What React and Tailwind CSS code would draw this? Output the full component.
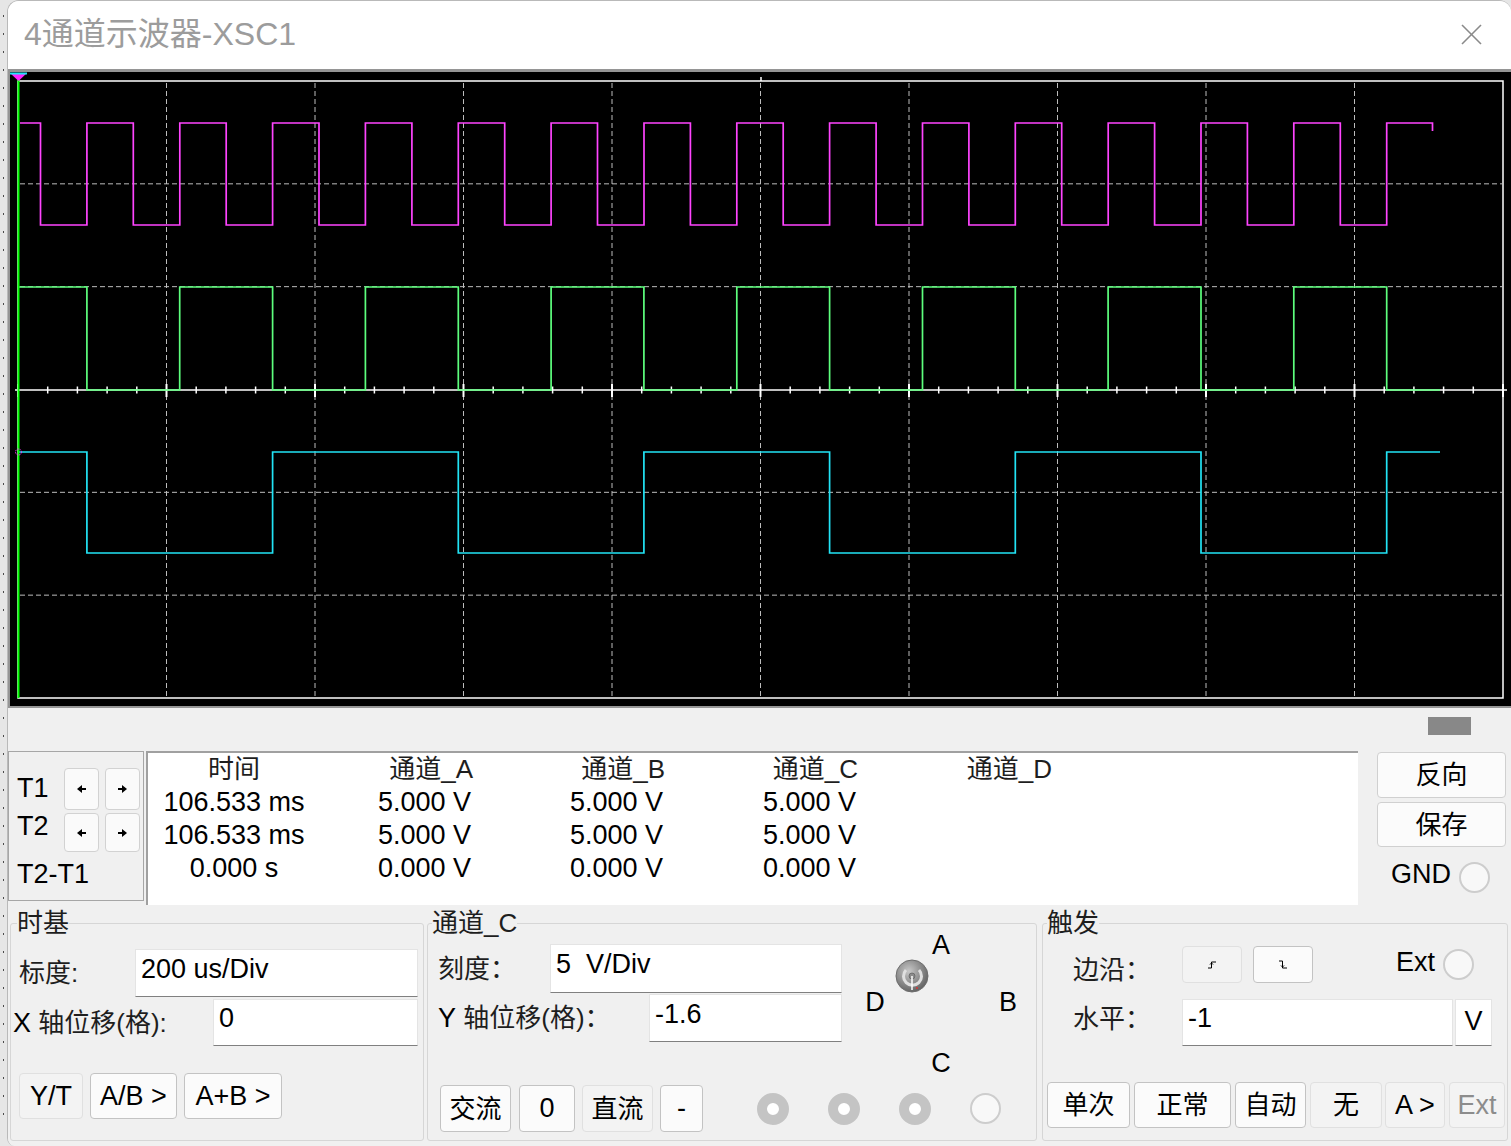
import React from "react";

const F = "font-['Liberation_Sans','Noto_Sans_CJK_SC',sans-serif]";
const BTN =
  "flex items-center justify-center rounded-[4px] border border-[#c3c3c3] bg-[#fbfbfb] text-[26px] leading-none text-black whitespace-nowrap";
const BTNL =
  "flex items-center justify-center rounded-[4px] border border-[#e0e0e0] bg-[#f3f3f3] text-[26px] leading-none text-black whitespace-nowrap";
const BTNG =
  "flex items-center justify-center rounded-[4px] border border-[#e0e0e0] bg-[#f3f3f3] text-[27px] leading-none text-[#8c8c8c] whitespace-nowrap";
const INP =
  "flex items-center bg-white border border-[#e4e4e4] border-b-[#808080] pl-[5px] pb-[8px] text-[27px] leading-none text-black whitespace-pre";
const LBL = "text-[26px] leading-[30px] text-[#1e1e1e] whitespace-nowrap";
const RING = "w-[32px] h-[32px] rounded-full border-[10px] border-[#c4c4c4] bg-white";
const EMPTY = "w-[31px] h-[31px] rounded-full border-2 border-[#cdcdcd] bg-[#f8f8f8]";

function sq(x0, xEnd, edges, yH, yL, startHigh) {
  let high = startHigh;
  let d = `M${x0} ${high ? yH : yL}`;
  for (const e of edges) {
    d += ` H${e.toFixed(1)} V${high ? yL : yH}`;
    high = !high;
  }
  d += ` H${xEnd}`;
  return d;
}

function Screen() {
  const vg = Array.from({ length: 9 }, (_, i) => 18 + 148.5 * (i + 1));
  const hg = [1, 2, 4, 5].map((j) => 81 + 102.83 * j);
  const ticks = Array.from({ length: 51 }, (_, k) => 18 + 29.7 * k);
  const aE = Array.from({ length: 30 }, (_, k) => 40.5 + 46.42 * k);
  const bE = Array.from({ length: 15 }, (_, k) => 86.9 + 92.84 * k);
  const cE = Array.from({ length: 8 }, (_, k) => 86.9 + 185.68 * k);
  return (
    <svg width="1501" height="634" viewBox="10 72 1501 634" className="block">
      <rect x="10" y="72" width="1501" height="634" fill="#000" />
      {vg.map((x, i) => (
        <line key={"v" + i} x1={x} y1="83" x2={x} y2="697" stroke="#bdbdbd" strokeWidth="1" strokeDasharray="5 3" />
      ))}
      {hg.map((y, i) => (
        <line key={"h" + i} x1="20" y1={y} x2="1502" y2={y} stroke="#bdbdbd" strokeWidth="1" strokeDasharray="5 3" />
      ))}
      <rect x="18" y="81" width="1485" height="617" fill="none" stroke="#fff" strokeWidth="1.5" />
      <line x1="15" y1="390" x2="1507" y2="390" stroke="#fff" strokeWidth="1.6" />
      {ticks.map((x, k) =>
        k % 5 === 0 ? (
          <line key={"t" + k} x1={x} y1="384" x2={x} y2="397" stroke="#fff" strokeWidth="2" />
        ) : (
          <line key={"t" + k} x1={x} y1="386.5" x2={x} y2="393.5" stroke="#fff" strokeWidth="1.5" />
        )
      )}
      <line x1="761" y1="77" x2="761" y2="81" stroke="#fff" strokeWidth="1.5" />
      <path d={sq(18, 1440, cE, 452, 553, true)} fill="none" stroke="#22e3f5" strokeWidth="1.7" />
      <path d={sq(18, 1440, bE, 287, 390, true)} fill="none" stroke="#5dff7d" strokeWidth="1.7" />
      <path d={sq(20, 1432.5, aE, 123, 225, true) + " V131"} fill="none" stroke="#ff44ff" strokeWidth="1.7" />
      <line x1="18.5" y1="76" x2="18.5" y2="698" stroke="#00ff00" strokeWidth="2" />
      <circle cx="18.5" cy="452" r="3" fill="none" stroke="#ff33ff" strokeWidth="1" strokeDasharray="1.5 1" />
      <polygon points="10,73 27,73 18.5,81" fill="#ff22ff" />
      <rect x="10" y="72.5" width="17" height="2" fill="#22e3f5" />
    </svg>
  );
}

function ArrowL() {
  return (
    <svg width="9" height="8" viewBox="0 0 9 8">
      <polygon points="0,4 5,0 5,8" fill="#000" />
      <rect x="5" y="3" width="4" height="2" fill="#000" />
    </svg>
  );
}
function ArrowR() {
  return (
    <svg width="9" height="8" viewBox="0 0 9 8">
      <polygon points="9,4 4,0 4,8" fill="#000" />
      <rect x="0" y="3" width="4" height="2" fill="#000" />
    </svg>
  );
}

function Knob() {
  return (
    <svg width="34" height="34" viewBox="0 0 34 34">
      <defs>
        <radialGradient id="kg" cx="40%" cy="35%" r="70%">
          <stop offset="0" stopColor="#c8c8c8" />
          <stop offset="1" stopColor="#5e5e5e" />
        </radialGradient>
      </defs>
      <circle cx="17" cy="17" r="16" fill="url(#kg)" stroke="#6e6e6e" />
      <path d="M24 11 A9 9 0 1 1 11 11" fill="none" stroke="#e0e0e0" strokeWidth="3" />
      <circle cx="17" cy="17" r="3" fill="#8c8c8c" stroke="#555" strokeWidth="0.6" />
      <line x1="17" y1="17" x2="17" y2="31" stroke="#fff" strokeWidth="1.5" />
      <circle cx="22" cy="29" r="1" fill="#d33" />
    </svg>
  );
}

function EdgeUp() {
  return (
    <svg width="9" height="8" viewBox="0 0 9 8">
      <polyline points="0,7 3.5,7 3.5,1 8,1" fill="none" stroke="#000" strokeWidth="1" />
      <polyline points="2,3.5 3.5,2 5,3.5" fill="none" stroke="#000" strokeWidth="1" />
    </svg>
  );
}
function EdgeDown() {
  return (
    <svg width="9" height="9" viewBox="0 0 9 9">
      <polyline points="0,1 3.5,1 3.5,8 8,8" fill="none" stroke="#000" strokeWidth="1" />
      <polyline points="2,5.5 3.5,7 5,5.5" fill="none" stroke="#000" strokeWidth="1" />
    </svg>
  );
}

function CloseX() {
  return (
    <svg width="21" height="21" viewBox="0 0 21 21">
      <line x1="1" y1="1" x2="20" y2="20" stroke="#8a8a8a" strokeWidth="1.6" />
      <line x1="20" y1="1" x2="1" y2="20" stroke="#8a8a8a" strokeWidth="1.6" />
    </svg>
  );
}

export default function App() {
  const dots = Array.from({ length: 62 }, (_, i) => i);
  return (
    <div className={`w-[1511px] h-[1146px] flex overflow-hidden bg-[#e6e6e6] ${F}`}>
      {/* desktop strip */}
      <div className="w-[7px] h-full flex flex-col items-center gap-[16px] pt-[15px]">
        {dots.map((i) => (
          <div key={i} className="w-[1px] h-[2px] bg-[#4a4a4a]" />
        ))}
      </div>

      {/* window */}
      <div className="flex-1 h-full flex flex-col border-l border-t border-[#b9b9b9] rounded-tl-[12px] rounded-tr-[12px] rounded-bl-[8px] overflow-hidden bg-[#f0f0f0]">
        {/* title bar */}
        <div className="h-[68px] bg-white flex items-center justify-between pl-[16px] pr-[29px] pb-[2px]">
          <div className="text-[32px] leading-none text-[#9c9c9c]">4通道示波器-XSC1</div>
          <CloseX />
        </div>

        {/* screen */}
        <div className="h-[639px] border-t-[3px] border-l-2 border-b-2 border-[#959595] bg-black">
          <Screen />
        </div>

        {/* panel */}
        <div className="flex-1 flex flex-col bg-[#f0f0f0]">
          {/* scroll thumb row */}
          <div className="h-[42px] flex justify-end pt-[9px] pr-[40px]">
            <div className="w-[43px] h-[18px] bg-[#888888]" />
          </div>

          {/* cursor / table / buttons */}
          <div className="h-[155px] flex pt-[1px]">
            <div className="w-[136px] h-[150px] border border-[#a6a6a6] bg-[#f0f0f0] flex flex-col pl-[8px]">
              <div className="mt-[16px] h-[42px] flex">
                <div className="w-[47px] mt-[5px] text-[27px] leading-[30px] text-black">T1</div>
                <div className="w-[35px] h-[42px] flex items-center justify-center rounded-[4px] border border-[#d2d2d2] bg-[#fafafa]">
                  <ArrowL />
                </div>
                <div className="ml-[6px] w-[35px] h-[42px] flex items-center justify-center rounded-[4px] border border-[#d2d2d2] bg-[#fafafa]">
                  <ArrowR />
                </div>
              </div>
              <div className="mt-[3px] h-[39px] flex">
                <div className="w-[47px] mt-[-2px] text-[27px] leading-[30px] text-black">T2</div>
                <div className="w-[35px] h-[39px] flex items-center justify-center rounded-[4px] border border-[#d2d2d2] bg-[#fafafa]">
                  <ArrowL />
                </div>
                <div className="ml-[6px] w-[35px] h-[39px] flex items-center justify-center rounded-[4px] border border-[#d2d2d2] bg-[#fafafa]">
                  <ArrowR />
                </div>
              </div>
              <div className="mt-[7px] text-[27px] leading-[30px] text-black">T2-T1</div>
            </div>

            <div className="ml-[2px] w-[1212px] h-[154px] bg-white border-t-2 border-l-2 border-[#a0a0a0] flex text-black whitespace-nowrap">
              <div className="w-[172px] flex flex-col text-center leading-[33px]">
                <div className="text-[26px] text-[#1e1e1e]">时间</div>
                <div className="text-[27px]">106.533 ms</div>
                <div className="text-[27px]">106.533 ms</div>
                <div className="text-[27px]">0.000 s</div>
              </div>
              <div className="w-[153px] flex flex-col text-right leading-[33px]">
                <div className="text-[26px] text-[#1e1e1e]">通道_A</div>
                <div className="text-[27px] pr-[2px]">5.000 V</div>
                <div className="text-[27px] pr-[2px]">5.000 V</div>
                <div className="text-[27px] pr-[2px]">0.000 V</div>
              </div>
              <div className="w-[192px] flex flex-col text-right leading-[33px]">
                <div className="text-[26px] text-[#1e1e1e]">通道_B</div>
                <div className="text-[27px] pr-[2px]">5.000 V</div>
                <div className="text-[27px] pr-[2px]">5.000 V</div>
                <div className="text-[27px] pr-[2px]">0.000 V</div>
              </div>
              <div className="w-[193px] flex flex-col text-right leading-[33px]">
                <div className="text-[26px] text-[#1e1e1e]">通道_C</div>
                <div className="text-[27px] pr-[2px]">5.000 V</div>
                <div className="text-[27px] pr-[2px]">5.000 V</div>
                <div className="text-[27px] pr-[2px]">0.000 V</div>
              </div>
              <div className="w-[194px] flex flex-col text-right leading-[33px]">
                <div className="text-[26px] text-[#1e1e1e]">通道_D</div>
              </div>
            </div>

            <div className="ml-[19px] w-[129px] flex flex-col">
              <div className={`${BTN} mt-[1px] h-[46px] border-[#d0d0d0]`}>反向</div>
              <div className={`${BTN} mt-[4px] h-[45px] border-[#d0d0d0]`}>保存</div>
              <div className="mt-[12px] flex items-start pl-[14px]">
                <div className="text-[27px] leading-[30px] text-black">GND</div>
                <div className={`${EMPTY} ml-[8px] mt-[3px]`} />
              </div>
            </div>
          </div>

          {/* groups */}
          <div className="flex-1 flex pt-[5px]">
            {/* 时基 */}
            <fieldset className="ml-[2px] w-[414px] h-[231px] border border-[#d6d6d6] rounded-[3px] flex flex-col">
              <legend className="ml-[6px] text-[26px] leading-[26px] text-[#1e1e1e]">时基</legend>
              <div className="mt-[13px] h-[48px] flex items-center pr-[5px]">
                <div className={`${LBL} pl-[8px]`}>标度:</div>
                <div className={`${INP} ml-auto w-[283px] h-[48px]`}>200 us/Div</div>
              </div>
              <div className="mt-[2px] h-[47px] flex items-center pr-[5px]">
                <div className={`${LBL} pl-[2px]`}>
                  <span className="text-[27px] text-black">X</span> 轴位移(格):
                </div>
                <div className={`${INP} ml-auto w-[205px] h-[47px] pb-0`}>0</div>
              </div>
              <div className="mt-[27px] h-[46px] flex pl-[8px] gap-[7px]">
                <div className={`${BTNL} w-[64px] h-[46px] text-[27px]`}>Y/T</div>
                <div className={`${BTN} w-[87px] h-[46px] text-[27px]`}>A/B &gt;</div>
                <div className={`${BTN} w-[98px] h-[46px] text-[27px]`}>A+B &gt;</div>
              </div>
            </fieldset>

            {/* 通道_C */}
            <fieldset className="ml-[3px] w-[610px] h-[231px] border border-[#d6d6d6] rounded-[3px] flex flex-col">
              <legend className="ml-[4px] text-[26px] leading-[26px] text-[#1e1e1e]">通道_C</legend>
              <div className="flex">
                <div className="w-[414px] flex flex-col">
                  <div className="mt-[8px] h-[49px] flex items-center">
                    <div className={`${LBL} pl-[10px]`}>刻度：</div>
                    <div className={`${INP} ml-auto w-[292px] h-[49px]`}>5  V/Div</div>
                  </div>
                  <div className="mt-[1px] h-[48px] flex items-center">
                    <div className={`${LBL} pl-[10px]`}>
                      <span className="text-[27px] text-black">Y</span> 轴位移(格)：
                    </div>
                    <div className={`${INP} ml-auto w-[193px] h-[48px]`}>-1.6</div>
                  </div>
                </div>
                <div className="relative w-[194px] h-[106px]">
                  <div className="absolute left-[53px] top-[23px]">
                    <Knob />
                  </div>
                  <div className="absolute left-[84px] top-[-4px] w-[30px] text-center text-[27px] leading-[26px] text-black">A</div>
                  <div className="absolute left-[18px] top-[53px] w-[30px] text-center text-[27px] leading-[26px] text-black">D</div>
                  <div className="absolute left-[151px] top-[53px] w-[30px] text-center text-[27px] leading-[26px] text-black">B</div>
                  <div className="absolute left-[84px] top-[114px] w-[30px] text-center text-[27px] leading-[26px] text-black">C</div>
                </div>
              </div>
              <div className="mt-[43px] h-[47px] flex items-center pl-[12px]">
                <div className={`${BTN} w-[71px] h-[47px]`}>交流</div>
                <div className={`${BTN} ml-[8px] w-[56px] h-[47px] text-[27px]`}>0</div>
                <div className={`${BTNL} ml-[7px] w-[71px] h-[47px]`}>直流</div>
                <div className={`${BTN} ml-[7px] w-[43px] h-[47px] text-[27px]`}>-</div>
                <div className={`${RING} ml-[54px]`} />
                <div className={`${RING} ml-[39px]`} />
                <div className={`${RING} ml-[39px]`} />
                <div className={`${EMPTY} ml-[39px]`} />
              </div>
            </fieldset>

            {/* 触发 */}
            <fieldset className="ml-[5px] w-[466px] h-[231px] border border-[#d6d6d6] rounded-[3px] flex flex-col">
              <legend className="ml-[4px] text-[26px] leading-[26px] text-[#1e1e1e]">触发</legend>
              <div className="mt-[10px] h-[37px] flex items-center">
                <div className={`${LBL} pl-[30px] w-[139px] mt-[11px]`}>边沿：</div>
                <div className={`${BTNL} w-[60px] h-[37px]`}>
                  <EdgeUp />
                </div>
                <div className={`${BTN} ml-[11px] w-[60px] h-[37px]`}>
                  <EdgeDown />
                </div>
                <div className="ml-[83px] mb-[6px] text-[27px] leading-[30px] text-black">Ext</div>
                <div className={`${EMPTY} ml-[8px]`} />
              </div>
              <div className="mt-[16px] h-[47px] flex items-center">
                <div className={`${LBL} pl-[30px] w-[139px] mb-[7px]`}>水平：</div>
                <div className={`${INP} w-[271px] h-[47px]`}>-1</div>
                <div className="ml-[2px] w-[37px] h-[47px] bg-white border border-[#e4e4e4] border-b-[#808080] flex justify-center pt-[6px] text-[27px] leading-[30px] text-black">
                  V
                </div>
              </div>
              <div className="mt-[36px] h-[46px] flex pl-[4px] gap-[4px]">
                <div className={`${BTN} w-[83px] h-[46px]`}>单次</div>
                <div className={`${BTN} w-[97px] h-[46px]`}>正常</div>
                <div className={`${BTN} w-[71px] h-[46px]`}>自动</div>
                <div className={`${BTNL} w-[72px] h-[46px]`}>无</div>
                <div className={`${BTNL} ml-[-1px] w-[60px] h-[46px] text-[27px]`}>A &gt;</div>
                <div className={`${BTNG} w-[56px] h-[46px]`}>Ext</div>
              </div>
            </fieldset>
          </div>
        </div>
      </div>
    </div>
  );
}
